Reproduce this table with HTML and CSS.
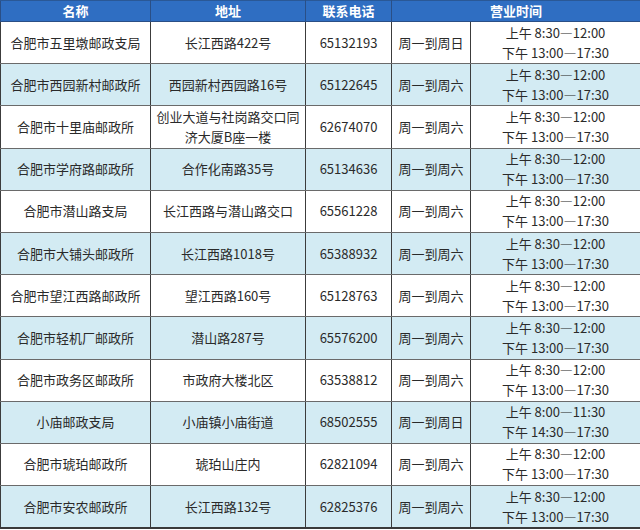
FILE: index.html
```html
<!DOCTYPE html>
<html lang="zh-CN">
<head>
<meta charset="utf-8">
<title>合肥市邮政营业网点</title>
<link rel="stylesheet" href="styles.css">
</head>
<body>
<table class="grid">
  <colgroup>
    <col class="c-name"><col class="c-addr"><col class="c-tel"><col class="c-day"><col class="c-time">
  </colgroup>
  <thead>
    <tr class="head"><th>名称</th><th>地址</th><th>联系电话</th><th colspan="2">营业时间</th></tr>
  </thead>
  <tbody>
    <tr><td>合肥市五里墩邮政支局</td><td>长江西路422号</td><td>65132193</td><td>周一到周日</td><td>上午 8:30—12:00<br>下午 13:00—17:30</td></tr>
    <tr><td>合肥市西园新村邮政所</td><td>西园新村西园路16号</td><td>65122645</td><td>周一到周六</td><td>上午 8:30—12:00<br>下午 13:00—17:30</td></tr>
    <tr><td>合肥市十里庙邮政所</td><td>创业大道与社岗路交口同<br>济大厦B座一楼</td><td>62674070</td><td>周一到周六</td><td>上午 8:30—12:00<br>下午 13:00—17:30</td></tr>
    <tr><td>合肥市学府路邮政所</td><td>合作化南路35号</td><td>65134636</td><td>周一到周六</td><td>上午 8:30—12:00<br>下午 13:00—17:30</td></tr>
    <tr><td>合肥市潜山路支局</td><td>长江西路与潜山路交口</td><td>65561228</td><td>周一到周六</td><td>上午 8:30—12:00<br>下午 13:00—17:30</td></tr>
    <tr><td>合肥市大铺头邮政所</td><td>长江西路1018号</td><td>65388932</td><td>周一到周六</td><td>上午 8:30—12:00<br>下午 13:00—17:30</td></tr>
    <tr><td>合肥市望江西路邮政所</td><td>望江西路160号</td><td>65128763</td><td>周一到周六</td><td>上午 8:30—12:00<br>下午 13:00—17:30</td></tr>
    <tr><td>合肥市轻机厂邮政所</td><td>潜山路287号</td><td>65576200</td><td>周一到周六</td><td>上午 8:30—12:00<br>下午 13:00—17:30</td></tr>
    <tr><td>合肥市政务区邮政所</td><td>市政府大楼北区</td><td>63538812</td><td>周一到周六</td><td>上午 8:30—12:00<br>下午 13:00—17:30</td></tr>
    <tr><td>小庙邮政支局</td><td>小庙镇小庙街道</td><td>68502555</td><td>周一到周日</td><td>上午 8:00—11:30<br>下午 14:30—17:30</td></tr>
    <tr><td>合肥市琥珀邮政所</td><td>琥珀山庄内</td><td>62821094</td><td>周一到周六</td><td>上午 8:30—12:00<br>下午 13:00—17:30</td></tr>
    <tr><td>合肥市安农邮政所</td><td>长江西路132号</td><td>62825376</td><td>周一到周六</td><td>上午 8:30—12:00<br>下午 13:00—17:30</td></tr>
  </tbody>
</table>
</body>
</html>
```
FILE: styles.css
```css
html, body {
  margin: 0;
  padding: 0;
  background: #ffffff;
}
body {
  width: 640px;
  height: 530px;
  overflow: hidden;
  font-family: "Noto Sans CJK SC", "Noto Sans", sans-serif;
  color: #2a2a2a;
}
.grid {
  width: 640px;
  border-collapse: collapse;
  table-layout: fixed;
  font-size: 13px;
}
.c-name { width: 150px; }
.c-addr { width: 155px; }
.c-tel { width: 86px; }
.c-day { width: 79px; }
.c-time { width: 170px; }
.head th {
  height: 20px;
  padding: 0;
  background: #2f6ec2;
  color: #ffffff;
  font-weight: bold;
  font-size: 13px;
  line-height: 20px;
  text-align: center;
  border: 1px solid #2a4f86;
  border-top-color: #2a5896;
}
.grid td {
  height: 41.2px;
  padding: 0 2px;
  text-align: center;
  vertical-align: middle;
  line-height: 20px;
  border-left: 1px solid #3c3c3c;
  border-right: 1px solid #3c3c3c;
  border-top: 1px solid #6a6a6a;
  border-bottom: 1px solid #6a6a6a;
  white-space: nowrap;
}
.grid tbody tr:nth-child(even) td {
  background: #d3ebf3;
}
.grid tbody tr:last-child td {
  border-bottom: 2px solid #3a3a3a;
}
```
